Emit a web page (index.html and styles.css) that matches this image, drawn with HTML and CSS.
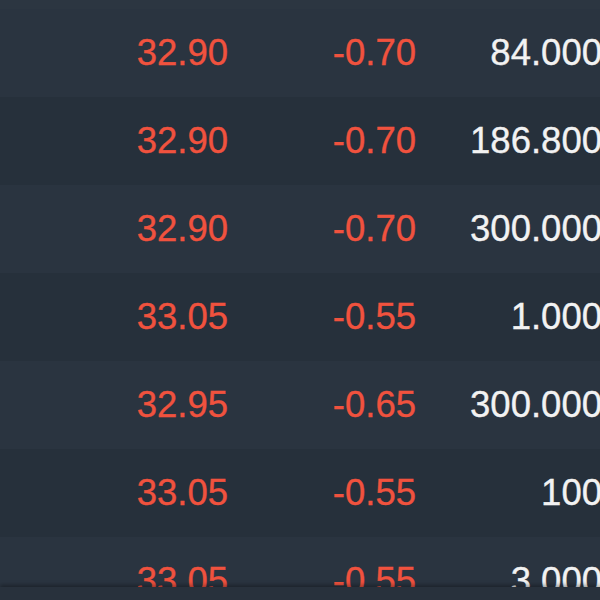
FILE: index.html
```html
<!DOCTYPE html>
<html>
<head>
<meta charset="utf-8">
<link rel="stylesheet" href="styles.css">
</head>
<body>
<div class="page">
  <div class="table">
    <div class="row odd"><span class="cell price">32.90</span><span class="cell chg">-0.70</span><span class="cell vol">84.000</span></div>
    <div class="row even"><span class="cell price">32.90</span><span class="cell chg">-0.70</span><span class="cell vol">186.800</span></div>
    <div class="row odd"><span class="cell price">32.90</span><span class="cell chg">-0.70</span><span class="cell vol">300.000</span></div>
    <div class="row even"><span class="cell price">33.05</span><span class="cell chg">-0.55</span><span class="cell vol">1.000</span></div>
    <div class="row odd"><span class="cell price">32.95</span><span class="cell chg">-0.65</span><span class="cell vol">300.000</span></div>
    <div class="row even"><span class="cell price">33.05</span><span class="cell chg">-0.55</span><span class="cell vol">100</span></div>
    <div class="row odd"><span class="cell price">33.05</span><span class="cell chg">-0.55</span><span class="cell vol">3.000</span></div>
  </div>
  <div class="bottombar"></div>
</div>
</body>
</html>
```
FILE: styles.css
```css
html, body {
  margin: 0;
  padding: 0;
  width: 600px;
  height: 600px;
  overflow: hidden;
  background: #2c3641;
}
.page {
  position: relative;
  width: 600px;
  height: 600px;
  overflow: hidden;
  font-family: "Liberation Sans", Arial, sans-serif;
}
.table {
  padding-top: 9px;
}
.row {
  display: grid;
  grid-template-columns: 228px 188px 186px;
  height: 88px;
  align-items: center;
  font-size: 36.5px;
  line-height: 1;
  -webkit-text-stroke: 0.35px currentColor;
}
.row.odd { background: #2a3440; }
.row.even { background: #26303b; }
.cell { text-align: right; white-space: nowrap; }
.price, .chg { color: #f0523e; }
.vol { color: #f2f2f2; }
.bottombar {
  position: absolute;
  left: 0;
  right: 0;
  bottom: 0;
  height: 13px;
  background: #28313c;
  box-shadow: 0 -2px 4px rgba(0,0,0,0.35);
}
```
